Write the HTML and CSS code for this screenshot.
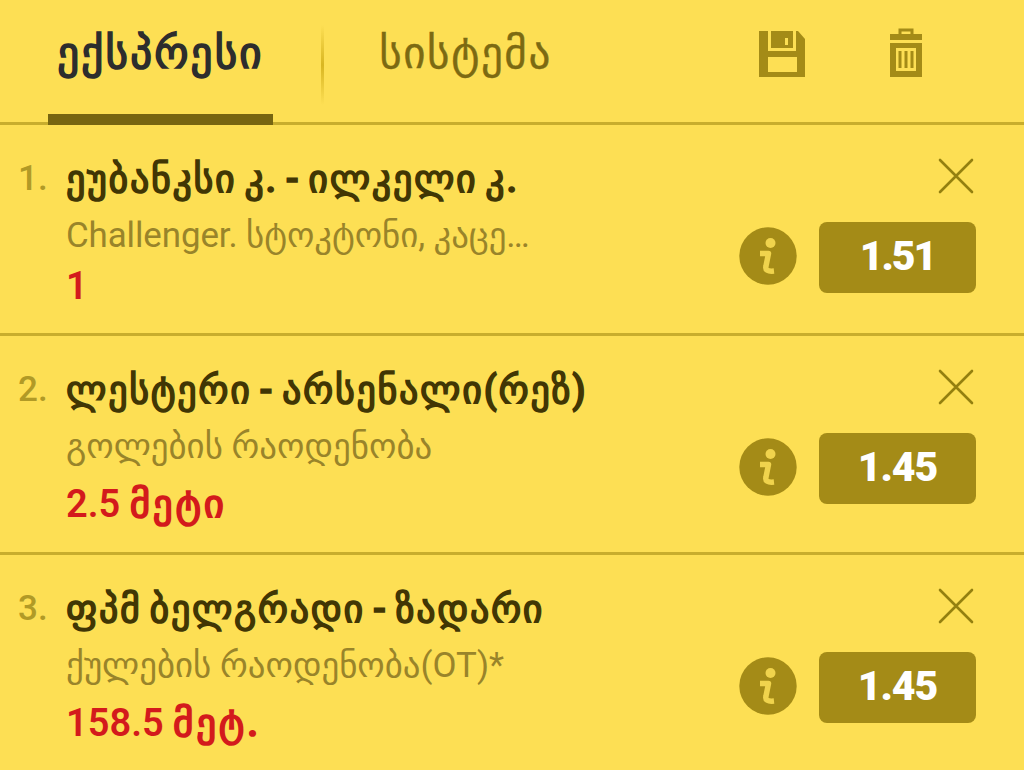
FILE: index.html
```
<!DOCTYPE html>
<html lang="ka">
<head>
<meta charset="utf-8">
<title>ექსპრესი</title>
<link rel="stylesheet" href="styles.css">
</head>
<body>
<svg class="defs" width="0" height="0">
	<symbol id="close" viewBox="0 0 36 36"><path d="M2 2L34 34M34 2L2 34" fill="none" stroke="#94800f" stroke-width="2.6" stroke-linecap="round"/></symbol>
	<symbol id="info" viewBox="0 0 58 58"><circle cx="29" cy="29" r="28.7" fill="#a48b17"/><circle cx="31.5" cy="16" r="5" fill="#f0d34d"/><path d="M21 26.500H29.500L27 39Q25.500 45 35 44" fill="none" stroke="#f0d34d" stroke-width="5.500" stroke-linejoin="round"/></symbol>
</svg>
<div class="tabs">
	<div class="tab active"><span>ექსპრესი</span></div>
	<div class="sep"></div>
	<div class="tab"><span>სისტემა</span></div>
	<div class="tools">
		<svg class="save" width="46" height="46" viewBox="0 0 46 46">
			<path fill="#a48b17" fill-rule="evenodd" d="M0 0H9V20H37V0H39L46 8V46H0ZM9 26V41H38V26Z"/>
			<path fill="#a48b17" d="M12 0H34V17H12Z"/>
			<path fill="#fcdf54" d="M26 7H29V14H26Z"/>
		</svg>
		<svg class="trash" width="32" height="49" viewBox="0 0 32 49">
			<path fill="none" stroke="#a48b17" stroke-width="3" d="M10 7V2H22V7"/>
			<path fill="#a48b17" d="M0 6H32V12H0Z"/>
			<path fill="#a48b17" fill-rule="evenodd" d="M0 15H32V49H0ZM6 20V43H26V20Z"/>
			<path fill="#a48b17" d="M8.500 23H11.500V40H8.500ZM14.500 23H17.500V40H14.500ZM20.500 23H23.500V40H20.500Z"/>
		</svg>
	</div>
</div>
<div class="bet first">
	<div class="num">1.</div>
	<div class="text">
		<div class="match">ეუბანკსი კ. - ილკელი კ.</div>
		<div class="market">Challenger. სტოკტონი, კაცე…</div>
		<div class="pick">1</div>
	</div>
	<div class="side">
		<svg class="close"><use href="#close"/></svg>
		<div class="row"><svg class="info"><use href="#info"/></svg><div class="odd">1.51</div></div>
	</div>
</div>
<div class="bet">
	<div class="num">2.</div>
	<div class="text">
		<div class="match">ლესტერი - არსენალი(რეზ)</div>
		<div class="market">გოლების რაოდენობა</div>
		<div class="pick">2.5 <span>მეტი</span></div>
	</div>
	<div class="side">
		<svg class="close"><use href="#close"/></svg>
		<div class="row"><svg class="info"><use href="#info"/></svg><div class="odd">1.45</div></div>
	</div>
</div>
<div class="bet">
	<div class="num">3.</div>
	<div class="text">
		<div class="match">ფპმ ბელგრადი - ზადარი</div>
		<div class="market">ქულების რაოდენობა(OT)*</div>
		<div class="pick">158.5 <span>მეტ.</span></div>
	</div>
	<div class="side">
		<svg class="close"><use href="#close"/></svg>
		<div class="row"><svg class="info"><use href="#info"/></svg><div class="odd">1.45</div></div>
	</div>
</div>
</body>
</html>
```
FILE: styles.css
```
*{box-sizing:border-box;}
body{margin:0;width:1024px;height:770px;overflow:hidden;background:#fddf54;font-family:Roboto,"Noto Sans","DejaVu Sans",sans-serif;}
.defs{display:block;}
.tabs{display:flex;height:125px;border-bottom:3px solid #c8ad2d;padding-left:48px;}
.tab{width:225px;height:125px;text-align:center;font-size:43px;line-height:106px;letter-spacing:1.600px;white-space:nowrap;color:#7c6a12;-webkit-text-stroke:.400px #7c6a12;}
.active{border-bottom:11px solid #776511;color:#2d2d2d;letter-spacing:2.200px;-webkit-text-stroke:1.600px #2d2d2d;}
.sep{width:3px;height:80px;margin:25px 29px 0 48px;background:linear-gradient(#fddf54,#d9b622 50%,#fddf54);}
.tools{display:flex;align-items:flex-start;margin-left:181px;}
.save{margin-top:31px;}
.trash{margin:28px 0 0 85px;}
.bet{display:flex;height:219px;border-bottom:3px solid #c8ad2d;}
.num{width:66px;padding:29px 0 0 18px;font-size:35px;line-height:50px;font-weight:500;color:#b19a26;}
.text{width:673px;padding-top:30px;white-space:nowrap;}
.match{height:54px;font-size:38px;line-height:49px;font-weight:500;letter-spacing:1.700px;word-spacing:-3.200px;color:#413604;-webkit-text-stroke:1.500px #413604;}
.market{height:59px;font-size:34.900px;line-height:54px;color:#99842a;}
.pick{font-size:38px;line-height:51px;font-weight:600;color:#d31a1c;}
.pick span{font-weight:500;font-size:39px;letter-spacing:2.800px;-webkit-text-stroke:1.700px #d31a1c;}
.first{height:211px;}
.first .market{height:52px;letter-spacing:-.100px;}
.side{width:237px;padding-top:33px;}
.close{display:block;width:36px;height:36px;margin:0 2px 28px auto;}
.row{display:flex;justify-content:space-between;align-items:center;}
.info{width:58px;height:58px;margin-bottom:3px;}
.odd{width:157px;height:71px;border-radius:8px;background:#a48b17;color:#fff;text-align:center;font:900 41px/69px Roboto,sans-serif;letter-spacing:-1px;}
.first .odd{letter-spacing:-2px;}
```
